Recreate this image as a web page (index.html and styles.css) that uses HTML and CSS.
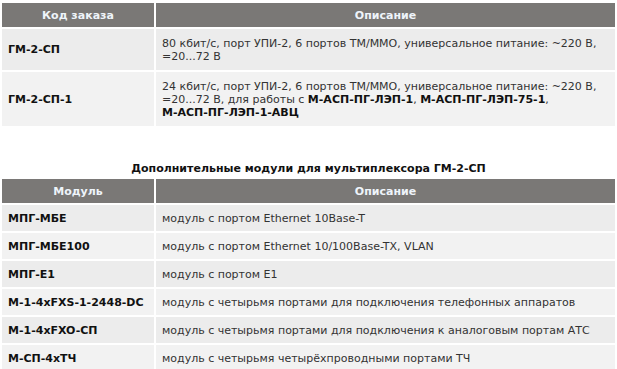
FILE: index.html
```html
<!DOCTYPE html>
<html lang="ru">
<head>
<meta charset="utf-8">
<link rel="stylesheet" href="styles.css">
</head>
<body>
<table class="grid grid-main">
  <thead>
    <tr><th class="col-code">Код заказа</th><th>Описание</th></tr>
  </thead>
  <tbody>
    <tr class="odd">
      <td class="code">ГМ-2-СП</td>
      <td class="desc">80 кбит/с, порт УПИ-2, 6 портов ТМ/ММО, универсальное питание: ~220 В, =20...72 В</td>
    </tr>
    <tr class="even">
      <td class="code">ГМ-2-СП-1</td>
      <td class="desc">24 кбит/с, порт УПИ-2, 6 портов ТМ/ММО, универсальное питание: ~220 В, =20...72 В, для работы с <b>М-АСП-ПГ-ЛЭП-1</b>, <b>М-АСП-ПГ-ЛЭП-75-1</b>, <b>М-АСП-ПГ-ЛЭП-1-АВЦ</b></td>
    </tr>
  </tbody>
</table>

<table class="grid grid-mod">
  <caption>Дополнительные модули для мультиплексора ГМ-2-СП</caption>
  <thead>
    <tr><th class="col-code">Модуль</th><th>Описание</th></tr>
  </thead>
  <tbody>
    <tr class="odd"><td class="code">МПГ-МБЕ</td><td class="desc">модуль с портом Ethernet 10Base-T</td></tr>
    <tr class="even"><td class="code">МПГ-МБЕ100</td><td class="desc">модуль с портом Ethernet 10/100Base-TX, VLAN</td></tr>
    <tr class="odd"><td class="code">МПГ-Е1</td><td class="desc">модуль с портом Е1</td></tr>
    <tr class="even"><td class="code">М-1-4xFXS-1-2448-DC</td><td class="desc">модуль с четырьмя портами для подключения телефонных аппаратов</td></tr>
    <tr class="odd"><td class="code">М-1-4xFXO-СП</td><td class="desc">модуль с четырьмя портами для подключения к аналоговым портам АТС</td></tr>
    <tr class="even"><td class="code">М-СП-4xТЧ</td><td class="desc">модуль с четырьмя четырёхпроводными портами ТЧ</td></tr>
  </tbody>
</table>
</body>
</html>
```

FILE: styles.css
```css
html, body {
  margin: 0;
  padding: 0;
  background: #ffffff;
}
body {
  padding-top: 1px;
  font-family: "DejaVu Sans", Verdana, sans-serif;
  font-size: 11px;
  line-height: 13px;
  color: #333333;
}
.grid {
  width: 617px;
  border-collapse: separate;
  border-spacing: 2px;
}
.grid th {
  background: #7a7876;
  color: #eef4fa;
  font-weight: bold;
  text-align: center;
  height: 24px;
  padding: 0 6px;
  box-sizing: border-box;
  vertical-align: middle;
}
.grid .col-code {
  width: 152px;
}
.grid td {
  padding: 0 6px;
  vertical-align: middle;
}
.grid tr.odd td {
  background: #ececec;
}
.grid tr.even td {
  background: #f2f2f2;
}
.grid td.code {
  font-weight: bold;
  color: #111111;
  white-space: nowrap;
}
.grid td.desc b {
  color: #111111;
  white-space: nowrap;
}
.grid-main tbody tr.odd td {
  height: 41px;
  box-sizing: border-box;
}
.grid-main tbody tr.even td {
  height: 54px;
  box-sizing: border-box;
}
.grid-mod {
  margin-top: 33px;
}
.grid-mod caption {
  font-weight: bold;
  color: #111111;
  line-height: 16px;
  text-align: center;
}
.grid-mod tbody td {
  height: 26px;
  box-sizing: border-box;
}
```
